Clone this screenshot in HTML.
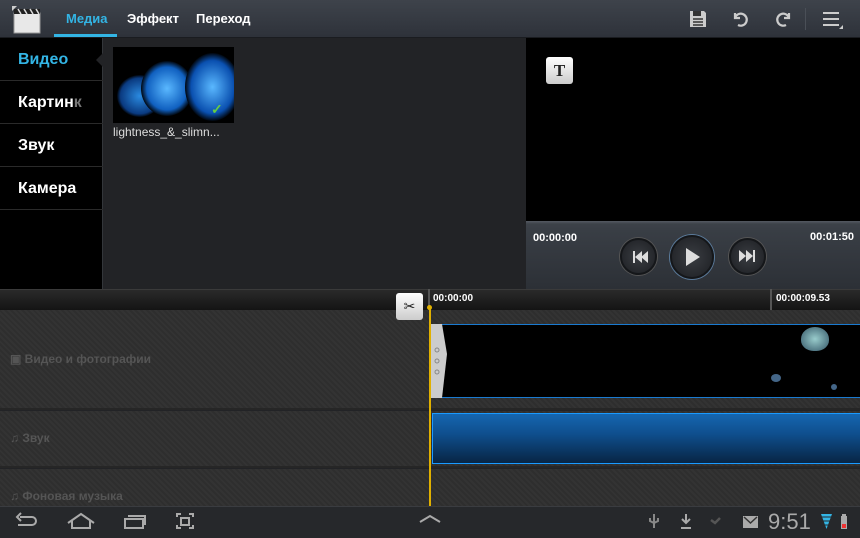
<!DOCTYPE html><html><head><meta charset="utf-8"><style>
*{margin:0;padding:0;box-sizing:border-box}
body{width:860px;height:538px;overflow:hidden;background:#222326;font-family:"Liberation Sans",sans-serif;position:relative}
.a{position:absolute}
.top{left:0;top:0;width:860px;height:38px;background:linear-gradient(#3e434b,#2e323a);border-bottom:1px solid #1a1c20}
.tab{top:11px;font-size:13px;color:#fff;font-weight:bold}
.side{left:0;top:38px;width:103px;height:251px;background:#000;border-right:1px solid #33363a}
.it{left:0;width:103px;height:43px;border-bottom:1px solid #2a2a2a;color:#fff;font-size:16px;padding:13px 0 0 18px;font-weight:bold;white-space:nowrap;overflow:hidden}
.tr{left:0;width:860px;background:repeating-linear-gradient(45deg,#2e2e2e 0 2px,#333 2px 4px)}
.lbl{color:#555;font-size:12px;font-weight:bold}
.btn{border-radius:50%;background:radial-gradient(#3a3d42,#1c1e22);border:2px solid #15171a;box-shadow:0 0 0 1px #555}
</style></head><body>
<div class="a top"></div>
<svg class="a" style="left:12px;top:6px" width="30" height="28"><rect x="2" y="7" width="26" height="20" fill="#e8e8e8" stroke="#999"/><rect x="2" y="3" width="26" height="5" fill="#222"/><path d="M6 3l3 5M12 3l3 5M18 3l3 5M24 3l3 5" stroke="#ddd" stroke-width="1.5"/><path d="M0 0h5l-5 5z" fill="#ccc"/></svg>
<div class="a tab" style="left:66px;color:#33b5e5">Медиа</div>
<div class="a" style="left:54px;top:34px;width:63px;height:3px;background:#33b5e5"></div>
<div class="a tab" style="left:127px">Эффект</div>
<div class="a tab" style="left:196px">Переход</div>
<svg class="a" style="left:688px;top:9px" width="20" height="20"><path d="M2 2h14l2 2v14H2z" fill="#ccc"/><rect x="5" y="2" width="8" height="5" fill="#333"/><path d="M5 10h10M5 13h10M5 16h10" stroke="#333" stroke-width="1.5"/></svg>
<svg class="a" style="left:730px;top:9px" width="20" height="20"><path d="M5 4v5h5M5 9a6 6 0 1 1 3 7" stroke="#ccc" stroke-width="2.2" fill="none"/></svg>
<svg class="a" style="left:774px;top:9px" width="20" height="20"><path d="M15 4v5h-5M15 9a6 6 0 1 0 -3 7" stroke="#ccc" stroke-width="2.2" fill="none"/></svg>
<div class="a" style="left:805px;top:8px;width:1px;height:22px;background:#4a4f57"></div>
<svg class="a" style="left:822px;top:10px" width="22" height="20"><path d="M1 3h16M1 9h16M1 15h16" stroke="#ccc" stroke-width="2"/><path d="M21 15v4h-4z" fill="#ccc"/></svg>
<div class="a side"></div>
<div class="a" style="left:96px;top:52px;width:0;height:0;border-top:8px solid transparent;border-bottom:8px solid transparent;border-right:8px solid #222326"></div>
<div class="a it" style="top:38px;color:#33b5e5">Видео</div>
<div class="a it" style="top:81px">Картин<span style="color:#777">к</span></div>
<div class="a it" style="top:124px">Звук</div>
<div class="a it" style="top:167px">Камера</div>
<div class="a" style="left:113px;top:47px;width:121px;height:76px;background:#000;overflow:hidden">
<div class="a" style="left:4px;top:28px;width:45px;height:42px;border-radius:50%;background:radial-gradient(#2a8ae0,#0a3a80 60%,#000 72%)"></div>
<div class="a" style="left:28px;top:14px;width:52px;height:55px;border-radius:50%;background:radial-gradient(#5ab8ff,#1060c0 55%,#000 72%)"></div>
<div class="a" style="left:72px;top:6px;width:55px;height:68px;border-radius:50%;background:radial-gradient(#5ab8ff,#0a50b0 55%,#000 72%)"></div>
<div class="a" style="left:98px;top:54px;color:#6c4;font-size:14px;font-weight:bold">✓</div></div>
<div class="a" style="left:113px;top:125px;color:#ddd;font-size:12px">lightness_&amp;_slimn...</div>
<div class="a" style="left:526px;top:38px;width:334px;height:183px;background:#000"></div>
<div class="a" style="left:546px;top:57px;width:27px;height:27px;border-radius:3px;background:linear-gradient(#fff,#ccc);font:bold 17px 'Liberation Serif',serif;text-align:center;line-height:27px;color:#222">T</div>
<div class="a" style="left:526px;top:221px;width:334px;height:68px;background:linear-gradient(#555a62 0,#3d4249 3px,#393e45 10px,#2c3036)"></div>
<div class="a" style="left:533px;top:232px;color:#fff;font-size:11px;font-weight:bold">00:00:00</div>
<div class="a" style="left:810px;top:231px;color:#fff;font-size:11px;font-weight:bold">00:01:50</div>
<div class="a btn" style="left:620px;top:238px;width:37px;height:37px"></div>
<div class="a btn" style="left:670px;top:235px;width:44px;height:44px;box-shadow:0 0 0 1px #5a7a9a"></div>
<div class="a btn" style="left:729px;top:238px;width:37px;height:37px"></div>
<svg class="a" style="left:620px;top:238px" width="146" height="42"><path d="M9 12v12h2V12zM11 18l7-6v12zM17 18l7-6v12z" fill="#ddd" transform="translate(4,1)"/><path d="M66 10l14 9-14 9z" fill="#ddd"/><path d="M119 12l7 6-7 6zM126 12l7 6-7 6zM133 12h2v12h-2z" fill="#ddd"/></svg>
<div class="a" style="left:0;top:289px;width:860px;height:21px;background:linear-gradient(#2a2a2a,#141414);border-top:1px solid #3a3a3a"></div>
<div class="a" style="left:428px;top:289px;width:2px;height:21px;background:#555"></div>
<div class="a" style="left:770px;top:289px;width:2px;height:21px;background:#555"></div>
<div class="a" style="left:433px;top:293px;color:#fff;font-size:10px;font-weight:bold">00:00:00</div>
<div class="a" style="left:776px;top:293px;color:#fff;font-size:10px;font-weight:bold">00:00:09.53</div>
<div class="a tr" style="top:310px;height:100px;border-bottom:2px solid #262626"></div>
<div class="a tr" style="top:411px;height:57px;border-bottom:2px solid #262626"></div>
<div class="a tr" style="top:469px;height:37px"></div>
<div class="a lbl" style="left:10px;top:352px">▣ Видео и фотографии</div>
<div class="a lbl" style="left:10px;top:431px">♫ Звук</div>
<div class="a lbl" style="left:10px;top:489px">♫ Фоновая музыка</div>
<div class="a" style="left:430px;top:324px;width:430px;height:74px;background:#000;border-top:1px solid #1a7ad0;border-bottom:1px solid #1a7ad0"></div>
<div class="a" style="left:801px;top:327px;width:28px;height:24px;border-radius:50% 50% 45% 45%;background:radial-gradient(#9cc,#356)"></div>
<div class="a" style="left:771px;top:374px;width:10px;height:8px;border-radius:50%;background:#468"></div>
<div class="a" style="left:831px;top:384px;width:6px;height:6px;border-radius:50%;background:#468"></div>
<svg class="a" style="left:430px;top:324px" width="18" height="74"><path d="M0 0h12l5 30-5 44H0z" fill="#ccc"/><circle cx="7" cy="26" r="2" fill="none" stroke="#888"/><circle cx="7" cy="37" r="2" fill="none" stroke="#888"/><circle cx="7" cy="48" r="2" fill="none" stroke="#888"/></svg>
<div class="a" style="left:432px;top:413px;width:428px;height:51px;background:linear-gradient(#1566b0,#0f4f8e 40%,#082544);border:1px solid #1a9aff;border-right:none"></div>
<div class="a" style="left:429px;top:307px;width:2px;height:199px;background:#e0b000"></div>
<div class="a" style="left:427px;top:305px;width:5px;height:5px;border-radius:50%;background:#e0b000"></div>
<div class="a" style="left:396px;top:293px;width:27px;height:27px;border-radius:3px;background:linear-gradient(#fff,#ccc);text-align:center;line-height:27px;font-size:14px;color:#222">✂</div>
<div class="a" style="left:0;top:506px;width:860px;height:32px;background:#26282b;border-top:1px solid #3a3c40"></div>
<svg class="a" style="left:0;top:506px" width="860" height="32" fill="none" stroke="#aaa" stroke-width="2"><path d="M20 11h12a4 4 0 0 1 0 8H18M21 7l-4 4 4 4"/><path d="M68 17l13-9 13 9M72 15v7h18v-7"/><path d="M125 13h18v9h-18zM128 10h17v9"/><path d="M177 11v-3h4M193 11v-3h-4M177 19v3h4M193 19v3h-4M181 12h8v7h-8z"/><path d="M420 16l10-6 10 6"/><path d="M654 8v14M650 12v3l4 2 4-2v-3" stroke="#888"/><path d="M686 8v9M682 13l4 4 4-4M681 22h10" stroke="#aaa"/><rect x="743" y="10" width="15" height="12" fill="#aaa" stroke="none"/><path d="M744 11l6.5 6 6.5-6" stroke="#333" stroke-width="1.5"/><path d="M711 14l4 3 5-5" stroke="#555" stroke-width="2.5"/></svg>
<div class="a" style="left:768px;top:509px;color:#aaa;font-size:22px">9:51</div>
<svg class="a" style="left:820px;top:513px" width="30" height="18"><path d="M1 1h11l-5.5 15z" fill="#33b5e5"/><path d="M1 4h11M2 8h9M4 12h5" stroke="#26282b" stroke-width="1"/><rect x="21" y="3" width="6" height="13" fill="#aaa"/><rect x="22" y="1" width="4" height="2" fill="#aaa"/><rect x="22" y="11" width="4" height="4" fill="#e33"/></svg>
</body></html>
